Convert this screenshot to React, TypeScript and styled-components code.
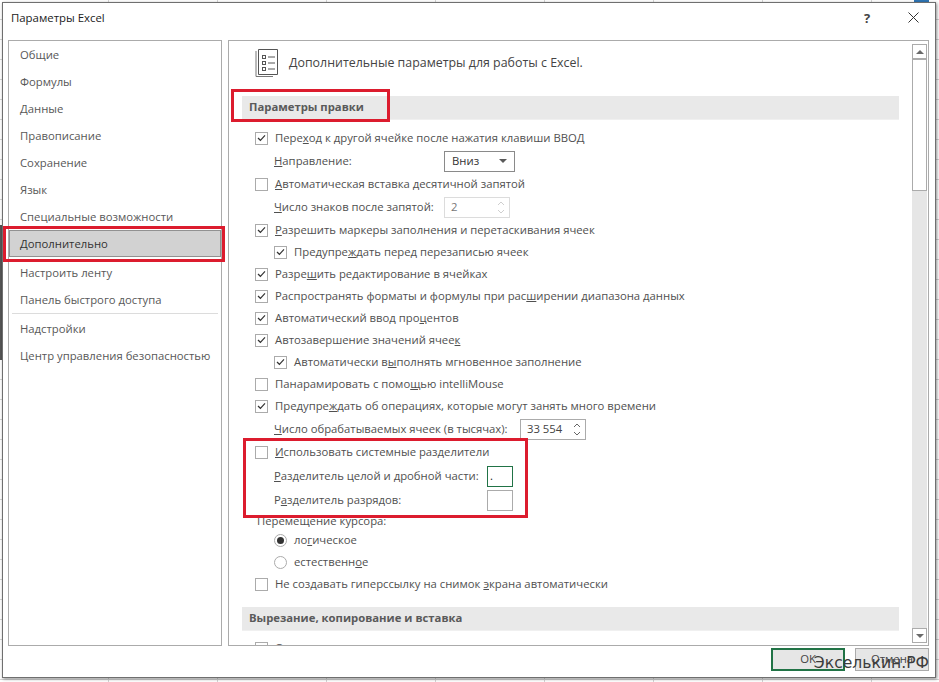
import { FC, ReactNode } from "react";
import styled, { createGlobalStyle } from "styled-components";

const GlobalStyle = createGlobalStyle`
  html, body {
    margin: 0;
    padding: 0;
    background: #fff;
  }
  body {
    font-family: "Open Sans", "Noto Sans", sans-serif;
    font-size: 11.3px;
    color: #505050;
  }
`;

const Desktop = styled.div`
  position: relative;
  box-sizing: border-box;
  width: 939px;
  height: 682px;
  overflow: hidden;
  padding: 2px 3px 4px 2px;
  background-color: #fff;
  background-image: linear-gradient(#555, #555), linear-gradient(#2f75b5, #2f75b5),
    repeating-linear-gradient(
      to bottom,
      transparent 0,
      transparent 19px,
      #d4d4d4 19px,
      #d4d4d4 20px
    ),
    repeating-linear-gradient(
      to right,
      transparent 0,
      transparent 108px,
      #d4d4d4 108px,
      #d4d4d4 109px
    );
  background-repeat: no-repeat, no-repeat, repeat, repeat;
  background-size: 2px 135px, 15px 2px, auto, auto;
  background-position: 0 225px, 914px 0, 0 0, 0 0;
`;

const Window = styled.div`
  box-sizing: border-box;
  height: 100%;
  display: flex;
  flex-direction: column;
  background: #fff;
  border: 1px solid #6f6f6f;
  box-shadow: 1px 1px 3px rgba(0, 0, 0, 0.45);
`;

const TitleBar = styled.div`
  display: flex;
  align-items: center;
  height: 37px;
  flex: none;
  padding: 0 16px 8px 8px;
  box-sizing: border-box;
  color: #222;
  font-size: 11.4px;
`;

const Title = styled.div`
  flex: 1;
`;

const HelpMark = styled.div`
  width: 44px;
  font-weight: 700;
  font-size: 13px;
  color: #444;
`;

const Panels = styled.div`
  display: flex;
  gap: 6px;
  height: 606px;
  flex: none;
  padding: 0 6px 0 5px;
`;

const Sidebar = styled.div`
  box-sizing: border-box;
  width: 214px;
  flex: none;
  border: 1px solid #ababab;
  color: #585858;
`;

const NavItem = styled.div<{ $active?: boolean; $gap?: number }>`
  box-sizing: border-box;
  display: flex;
  align-items: center;
  height: 27px;
  margin-top: ${(p) => p.$gap ?? 0}px;
  padding-left: ${(p) => (p.$active ? "10px" : "11px")};
  color: ${(p) => (p.$active ? "#333" : "inherit")};
  background: ${(p) => (p.$active ? "#d2d2d2" : "transparent")};
  border: ${(p) => (p.$active ? "1px solid #919191" : "none")};
`;

const NavRule = styled.div`
  height: 1px;
  margin: 0 3px;
  background: #dcdcdc;
`;

const Main = styled.div`
  box-sizing: border-box;
  flex: 1;
  display: flex;
  border: 1px solid #ababab;
  overflow: hidden;
`;

const Content = styled.div`
  flex: 1;
  min-width: 0;
  padding: 0 13px;
`;

const Header = styled.div`
  display: flex;
  align-items: center;
  gap: 10px;
  height: 42px;
  padding: 0 0 2px 13px;
  margin-bottom: 11px;
  font-size: 12.4px;
  color: #444;
`;

const Section = styled.div<{ $gap?: number }>`
  box-sizing: border-box;
  display: flex;
  align-items: center;
  height: 24px;
  margin-top: ${(p) => p.$gap ?? 0}px;
  padding: 0 0 2px 7px;
  background: #e9e9e9;
  border-bottom: 1px solid #f0f0f0;
  font-weight: 700;
  color: #5a5a5a;
`;

const Row = styled.div<{ $gap: number; $indent?: number }>`
  display: flex;
  align-items: center;
  height: 18px;
  margin-top: ${(p) => p.$gap}px;
  padding-left: ${(p) => p.$indent ?? 0}px;
  white-space: nowrap;
`;

const Label = styled.span`
  padding-bottom: 2px;
`;

const CheckBox = styled.span`
  box-sizing: border-box;
  flex: none;
  display: flex;
  align-items: center;
  justify-content: center;
  width: 13px;
  height: 13px;
  margin-right: 7px;
  border: 1px solid #ababab;
  background: #fff;
`;

const Radio = styled.span<{ $on?: boolean }>`
  box-sizing: border-box;
  flex: none;
  display: flex;
  align-items: center;
  justify-content: center;
  width: 13px;
  height: 13px;
  margin-right: 7px;
  border: 1px solid #ababab;
  border-radius: 50%;
  &::after {
    content: "";
    display: ${(p) => (p.$on ? "block" : "none")};
    width: 7px;
    height: 7px;
    border-radius: 50%;
    background: #333;
  }
`;

const FieldLabel = styled.span<{ $width: number }>`
  flex: none;
  width: ${(p) => p.$width}px;
  padding-bottom: 2px;
`;

const SelectBox = styled.div`
  box-sizing: border-box;
  display: flex;
  align-items: center;
  justify-content: space-between;
  width: 71px;
  height: 21px;
  padding: 0 7px 2px;
  border: 1px solid #8a8a8a;
  color: #333;
  &::after {
    content: "";
    margin-top: 2px;
    border-left: 4px solid transparent;
    border-right: 4px solid transparent;
    border-top: 4px solid #5a5a5a;
  }
`;

const SpinBox = styled.div<{ $disabled?: boolean; $width: number }>`
  box-sizing: border-box;
  display: flex;
  align-items: center;
  justify-content: space-between;
  width: ${(p) => p.$width}px;
  height: 21px;
  padding: 0 4px 0 6px;
  border: 1px solid ${(p) => (p.$disabled ? "#dcdcdc" : "#ababab")};
  color: ${(p) => (p.$disabled ? "#777" : "#444")};
`;

const TextBox = styled.div<{ $focus?: boolean }>`
  box-sizing: border-box;
  width: 26px;
  height: 21px;
  padding-left: 2px;
  line-height: 18px;
  color: #222;
  border: 1px solid ${(p) => (p.$focus ? "#217346" : "#ababab")};
`;

const Scrollbar = styled.div`
  flex: none;
  box-sizing: border-box;
  display: flex;
  flex-direction: column;
  width: 15px;
  margin: 3px 1px 2px 0;
  background: #e6e6e6;
`;

const ScrollButton = styled.div<{ $down?: boolean }>`
  box-sizing: border-box;
  flex: none;
  display: flex;
  align-items: center;
  justify-content: center;
  height: 15px;
  background: #fff;
  border: 1px solid #ababab;
  margin-top: ${(p) => (p.$down ? "auto" : "0")};
  &::after {
    content: "";
    border-left: 4px solid transparent;
    border-right: 4px solid transparent;
    border-${(p) => (p.$down ? "top" : "bottom")}: 4px solid #6a6a6a;
  }
`;

const ScrollThumb = styled.div`
  box-sizing: border-box;
  flex: none;
  height: 132px;
  background: #fff;
  border: 1px solid #ababab;
`;

const Footer = styled.div`
  display: flex;
  justify-content: flex-end;
  gap: 10px;
  padding: 2px 6px 0 0;
`;

const Button = styled.div<{ $primary?: boolean }>`
  box-sizing: border-box;
  display: flex;
  align-items: center;
  justify-content: center;
  width: 74px;
  height: 23px;
  padding-bottom: 2px;
  background: #e6e6e6;
  color: #444;
  border: ${(p) => (p.$primary ? "2px solid #217346" : "1px solid #ababab")};
`;

const Highlight = styled.div<{ $x: number; $y: number; $w: number; $h: number }>`
  position: absolute;
  box-sizing: border-box;
  left: ${(p) => p.$x}px;
  top: ${(p) => p.$y}px;
  width: ${(p) => p.$w}px;
  height: ${(p) => p.$h}px;
  border: 3px solid #dc1c2e;
  pointer-events: none;
`;

const Watermark = styled.div`
  position: absolute;
  right: 10px;
  top: 653px;
  font-family: "DejaVu Sans", sans-serif;
  font-size: 15.6px;
  line-height: 20px;
  color: #3c3c3c;
`;

const Check: FC = () => (
  <svg width="9" height="8" viewBox="0 0 9 8" fill="none">
    <path d="M1 4 L3.4 6.3 L8 1.4" stroke="#333" strokeWidth="1.2" />
  </svg>
);

const CheckRow: FC<{ gap: number; indent?: number; on?: boolean; children: ReactNode }> = ({
  gap,
  indent,
  on,
  children,
}) => (
  <Row $gap={gap} $indent={indent ?? 13}>
    <CheckBox>{on && <Check />}</CheckBox>
    <Label>{children}</Label>
  </Row>
);

const SpinArrows: FC<{ color: string }> = ({ color }) => (
  <svg width="8" height="15" viewBox="0 0 8 15" fill="none" stroke={color} strokeWidth="1">
    <path d="M1 5 L4 2 L7 5" />
    <path d="M1 10 L4 13 L7 10" />
  </svg>
);

const PageIcon: FC = () => (
  <svg width="24" height="30" viewBox="0 0 24 30" fill="none" stroke="#555" strokeWidth="1">
    <path d="M3.5 2.5 H22.5 V27.5 H3.5 Z" />
    <path d="M1 4 V29.5 H18" stroke="#777" />
    <rect x="7.5" y="8.5" width="3" height="3" />
    <rect x="7.5" y="14.5" width="3" height="3" />
    <rect x="7.5" y="20.5" width="3" height="3" />
    <path d="M13 10 H20 M13 16 H20 M13 22 H20" />
  </svg>
);

const App: FC = () => (
  <Desktop>
    <GlobalStyle />
    <Window>
      <TitleBar>
        <Title>Параметры Excel</Title>
        <HelpMark>?</HelpMark>
        <svg width="11" height="11" viewBox="0 0 11 11" stroke="#333" strokeWidth="1">
          <path d="M0.5 0.5 L10.5 10.5 M10.5 0.5 L0.5 10.5" />
        </svg>
      </TitleBar>
      <Panels>
        <Sidebar>
          <NavItem>Общие</NavItem>
          <NavItem>Формулы</NavItem>
          <NavItem>Данные</NavItem>
          <NavItem>Правописание</NavItem>
          <NavItem>Сохранение</NavItem>
          <NavItem>Язык</NavItem>
          <NavItem>Специальные возможности</NavItem>
          <NavItem $active>Дополнительно</NavItem>
          <NavItem $gap={2}>Настроить ленту</NavItem>
          <NavItem>Панель быстрого доступа</NavItem>
          <NavRule />
          <NavItem $gap={1}>Надстройки</NavItem>
          <NavItem>Центр управления безопасностью</NavItem>
        </Sidebar>
        <Main>
          <Content>
            <Header>
              <PageIcon />
              Дополнительные параметры для работы с Excel.
            </Header>
            <Section>Параметры правки</Section>
            <CheckRow gap={9} on>
              Пере<u>х</u>од к другой ячейке после нажатия клавиши ВВОД
            </CheckRow>
            <Row $gap={5} $indent={32}>
              <FieldLabel $width={170}>
                <u>Н</u>аправление:
              </FieldLabel>
              <SelectBox>Вниз</SelectBox>
            </Row>
            <CheckRow gap={5}>
              <u>А</u>втоматическая вставка десятичной запятой
            </CheckRow>
            <Row $gap={5} $indent={32}>
              <FieldLabel $width={170}>
                <u>Ч</u>исло знаков после запятой:
              </FieldLabel>
              <SpinBox $disabled $width={66}>
                <Label>2</Label>
                <SpinArrows color="#cfcfcf" />
              </SpinBox>
            </Row>
            <CheckRow gap={5} on>
              <u>Р</u>азрешить маркеры заполнения и перетаскивания ячеек
            </CheckRow>
            <CheckRow gap={4} indent={32} on>
              Предупре<u>ж</u>дать перед перезаписью ячеек
            </CheckRow>
            <CheckRow gap={4} on>
              Разре<u>ш</u>ить редактирование в ячейках
            </CheckRow>
            <CheckRow gap={4} on>
              Распространять форматы и формулы при рас<u>ш</u>ирении диапазона данных
            </CheckRow>
            <CheckRow gap={4} on>
              Автоматический ввод про<u>ц</u>ентов
            </CheckRow>
            <CheckRow gap={4} on>
              Автозавершение значений ячее<u>к</u>
            </CheckRow>
            <CheckRow gap={4} indent={32} on>
              Автоматически в<u>ы</u>полнять мгновенное заполнение
            </CheckRow>
            <CheckRow gap={4}>
              Панарамировать с помо<u>щ</u>ью intelliMouse
            </CheckRow>
            <CheckRow gap={4} on>
              Предупре<u>ж</u>дать об операциях, которые могут занять много времени
            </CheckRow>
            <Row $gap={5} $indent={32}>
              <FieldLabel $width={246}>
                <u>Ч</u>исло обрабатываемых ячеек (в тысячах):
              </FieldLabel>
              <SpinBox $width={66}>
                <Label>33 554</Label>
                <SpinArrows color="#666" />
              </SpinBox>
            </Row>
            <CheckRow gap={5}>
              <u>И</u>спользовать системные разделители
            </CheckRow>
            <Row $gap={6} $indent={32}>
              <FieldLabel $width={213}>
                <u>Р</u>азделитель целой и дробной части:
              </FieldLabel>
              <TextBox $focus>.</TextBox>
            </Row>
            <Row $gap={6} $indent={32}>
              <FieldLabel $width={213}>
                Р<u>а</u>зделитель разрядов:
              </FieldLabel>
              <TextBox />
            </Row>
            <Row $gap={3} $indent={15}>
              <Label>Перемещение курсора:</Label>
            </Row>
            <Row $gap={1} $indent={32}>
              <Radio $on />
              <Label>
                ло<u>г</u>ическое
              </Label>
            </Row>
            <Row $gap={4} $indent={32}>
              <Radio />
              <Label>
                естественн<u>о</u>е
              </Label>
            </Row>
            <CheckRow gap={4}>
              Не создавать гиперссылку на снимок <u>э</u>крана автоматически
            </CheckRow>
            <Section $gap={14}>Вырезание, копирование и вставка</Section>
            <CheckRow gap={8}>О</CheckRow>
          </Content>
          <Scrollbar>
            <ScrollButton />
            <ScrollThumb />
            <ScrollButton $down />
          </Scrollbar>
        </Main>
      </Panels>
      <Footer>
        <Button $primary>OK</Button>
        <Button>Отмена</Button>
      </Footer>
    </Window>
    <Highlight $x={3} $y={226} $w={222} $h={36} />
    <Highlight $x={231} $y={89} $w={159} $h={33} />
    <Highlight $x={243} $y={438} $w={285} $h={80} />
    <Watermark>Экселькин.РФ</Watermark>
  </Desktop>
);

export default App;
